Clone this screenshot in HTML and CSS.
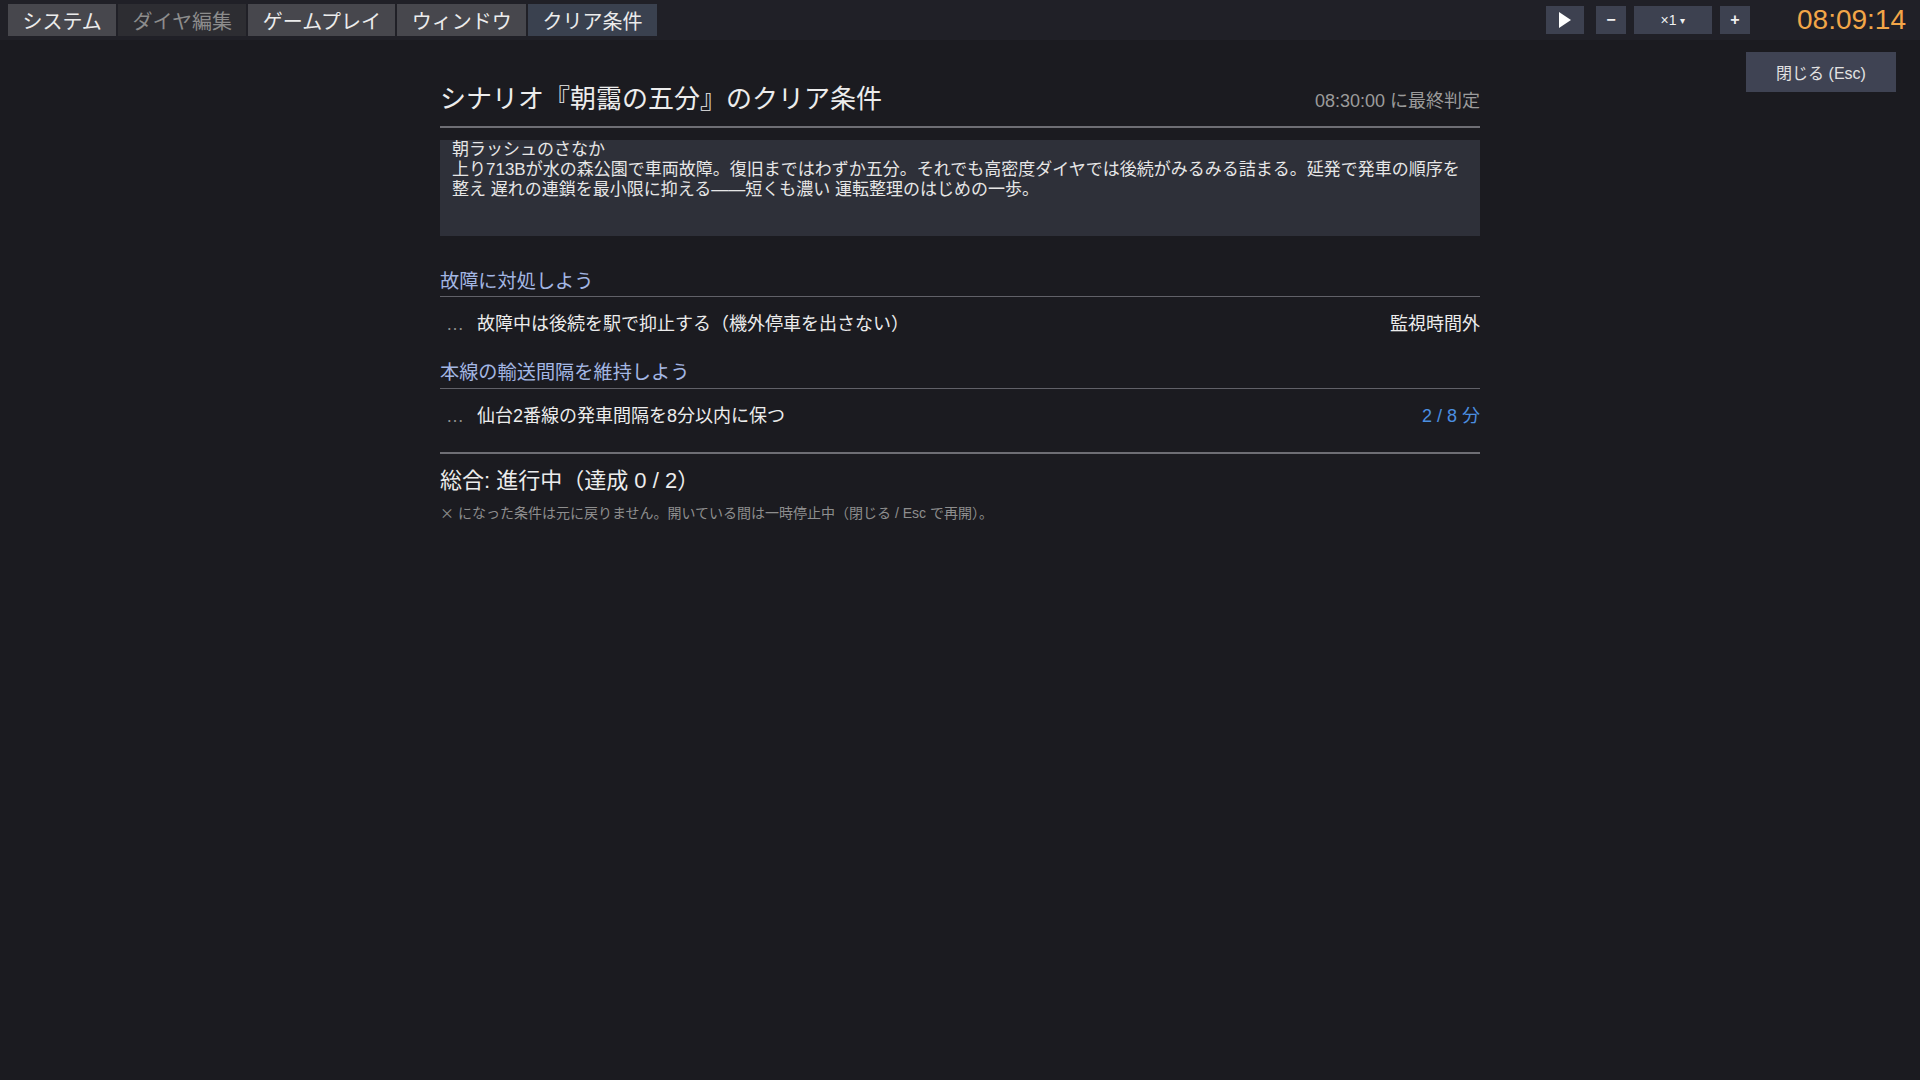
FILE: index.html
```html
<!DOCTYPE html>
<html lang="ja">

<head>
    <meta charset="UTF-8">
    <title>クリア条件</title>
    <link rel="stylesheet" href="styles.css">
</head>

<body>
    <header class="topbar">
        <div class="menu">
            <button class="menu-btn">システム</button>
            <button class="menu-btn disabled">ダイヤ編集</button>
            <button class="menu-btn">ゲームプレイ</button>
            <button class="menu-btn">ウィンドウ</button>
            <button class="menu-btn active">クリア条件</button>
        </div>
        <div class="controls">
            <button class="ctl play">
                <svg width="14" height="16" viewBox="0 0 14 16"><path d="M1 0 L13 8 L1 16 Z" fill="#fff"/></svg>
            </button>
            <button class="ctl small">−</button>
            <button class="ctl speed">×1 <span class="caret">▾</span></button>
            <button class="ctl small">+</button>
            <span class="clock">08:09:14</span>
        </div>
    </header>

    <button class="close-btn">閉じる (Esc)</button>

    <main class="panel">
        <div class="title-row">
            <h1>シナリオ『朝靄の五分』のクリア条件</h1>
            <span class="deadline">08:30:00 に最終判定</span>
        </div>

        <div class="desc">朝ラッシュのさなか<br>上り713Bが水の森公園で車両故障。復旧まではわずか五分。それでも高密度ダイヤでは後続がみるみる詰まる。延発で発車の順序を整え 遅れの連鎖を最小限に抑える——短くも濃い 運転整理のはじめの一歩。</div>

        <section class="group">
            <h2>故障に対処しよう</h2>
            <div class="item">
                <span class="mark">…</span>
                <span class="label">故障中は後続を駅で抑止する（機外停車を出さない）</span>
                <span class="value">監視時間外</span>
            </div>
        </section>

        <section class="group">
            <h2>本線の輸送間隔を維持しよう</h2>
            <div class="item">
                <span class="mark">…</span>
                <span class="label">仙台2番線の発車間隔を8分以内に保つ</span>
                <span class="value progress">2 / 8 分</span>
            </div>
        </section>

        <div class="summary">
            <div class="total">総合: 進行中（達成 0 / 2）</div>
            <div class="note"><span class="cross">×</span> になった条件は元に戻りません。開いている間は一時停止中（閉じる / Esc で再開）。</div>
        </div>
    </main>
</body>

</html>
```

FILE: styles.css
```css
body {
    margin: 0;
    background: #1b1b20;
    color: #e6e6e6;
    font-family: "Liberation Sans", "Noto Sans CJK JP", sans-serif;
    height: 100vh;
}

button {
    font-family: inherit;
    border: none;
    cursor: pointer;
}

.topbar {
    height: 40px;
    background: #202027;
    display: flex;
    align-items: center;
    justify-content: space-between;
    padding: 0 14px 0 8px;
}

.menu {
    display: flex;
    gap: 2px;
}

.menu-btn {
    height: 32px;
    padding: 0 14.4px;
    font-size: 20px;
    background: #47474d;
    color: #ececec;
}

.menu-btn.disabled {
    background: #2d2d32;
    color: #8c8c8c;
}

.menu-btn.active {
    background: #3a414f;
}

.controls {
    display: flex;
    align-items: center;
    gap: 8px;
}

.ctl {
    height: 28px;
    background: #3d4150;
    color: #f0f0f0;
    font-size: 15px;
    display: flex;
    align-items: center;
    justify-content: center;
    padding: 0;
}

.ctl.play {
    width: 38px;
    margin-right: 4px;
}

.ctl.small {
    width: 30px;
    font-size: 16px;
    font-weight: bold;
}

.ctl.speed {
    width: 78px;
    font-size: 14px;
}

.caret {
    font-size: 10px;
    margin-left: 4px;
}

.clock {
    margin-left: 39px;
    font-size: 28px;
    color: #f2a648;
}

.close-btn {
    position: absolute;
    top: 52px;
    right: 24px;
    width: 150px;
    height: 40px;
    background: #3f4353;
    color: #e2e2e2;
    font-size: 16px;
}

.panel {
    width: 1040px;
    margin: 42px auto 0;
}

.title-row {
    display: flex;
    justify-content: space-between;
    align-items: center;
    padding-bottom: 10px;
    border-bottom: 2px solid #6e6e74;
}

.title-row h1 {
    margin: 0;
    font-size: 26px;
    font-weight: normal;
    line-height: 34px;
    color: #ececec;
}

.deadline {
    font-size: 18px;
    color: #9b9b9b;
}

.desc {
    margin-top: 12px;
    background: #2e3039;
    padding: 0 12px 36px;
    font-size: 17px;
    line-height: 20px;
    color: #e6e6e6;
}

.group h2 {
    margin: 34px 0 0;
    font-size: 19.2px;
    font-weight: normal;
    line-height: 24px;
    padding-bottom: 2px;
    color: #a3b6e3;
    border-bottom: 1px solid #616168;
}

.group + .group h2 {
    margin-top: 17px;
    padding-bottom: 3px;
}

.item {
    display: flex;
    align-items: center;
    padding: 15px 0 8px 6px;
    font-size: 18px;
    line-height: 24px;
}

.mark {
    width: 24px;
    margin-right: 7px;
    color: #8e8e8e;
}

.label {
    flex: 1;
    color: #ececec;
}

.value {
    color: #ececec;
}

.value.progress {
    color: #4b8fe0;
}

.summary {
    margin-top: 16px;
    border-top: 2px solid #6e6e74;
    padding-top: 13px;
}

.total {
    font-size: 22px;
    line-height: 28px;
    color: #ececec;
}

.note {
    margin-top: 7px;
    font-size: 14px;
    line-height: 20px;
    color: #8e8e8e;
}

.cross {
    font-family: "Noto Sans CJK JP", sans-serif;
}
```
